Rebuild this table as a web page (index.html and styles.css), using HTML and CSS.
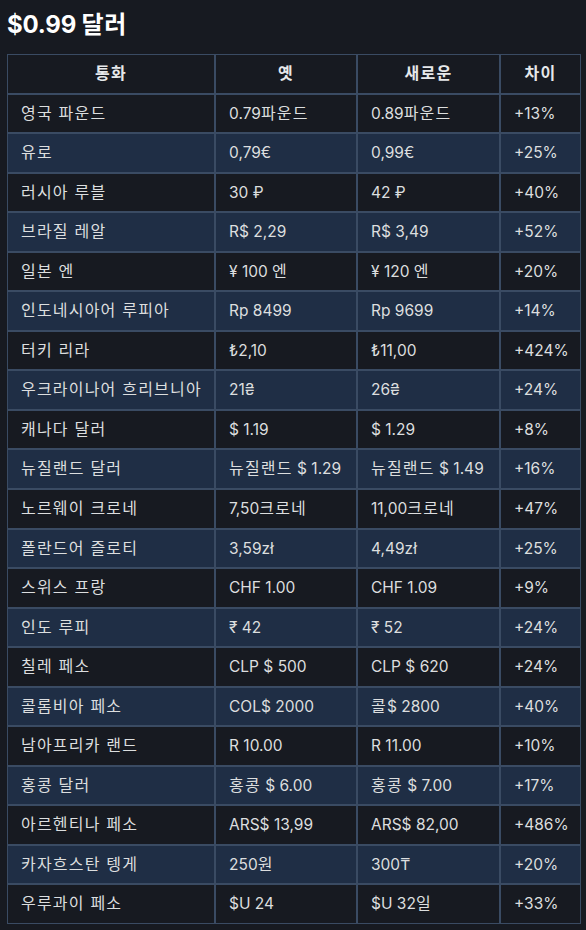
FILE: index.html
```html
<!DOCTYPE html>
<html lang="ko">
<head>
<meta charset="utf-8">
<link rel="stylesheet" href="styles.css">
</head>
<body>
<h2 class="title">$0.99 <span class="k">달러</span></h2>
<table class="prices">
<colgroup><col class="c1"><col class="c2"><col class="c3"><col class="c4"></colgroup>
<thead>
<tr><th><span class="k">통화</span></th><th><span class="k">옛</span></th><th><span class="k">새로운</span></th><th><span class="k">차이</span></th></tr>
</thead>
<tbody>
<tr><td><span class="k">영국 파운드</span></td><td>0.79<span class="k">파운드</span></td><td>0.89<span class="k">파운드</span></td><td>+13%</td></tr>
<tr><td><span class="k">유로</span></td><td>0,79€</td><td>0,99€</td><td>+25%</td></tr>
<tr><td><span class="k">러시아 루블</span></td><td>30 ₽</td><td>42 ₽</td><td>+40%</td></tr>
<tr><td><span class="k">브라질 레알</span></td><td>R$ 2,29</td><td>R$ 3,49</td><td>+52%</td></tr>
<tr><td><span class="k">일본 엔</span></td><td>¥ 100 <span class="k">엔</span></td><td>¥ 120 <span class="k">엔</span></td><td>+20%</td></tr>
<tr><td><span class="k">인도네시아어 루피아</span></td><td>Rp 8499</td><td>Rp 9699</td><td>+14%</td></tr>
<tr><td><span class="k">터키 리라</span></td><td>₺2,10</td><td>₺11,00</td><td>+424%</td></tr>
<tr><td><span class="k">우크라이나어 흐리브니아</span></td><td>21₴</td><td>26₴</td><td>+24%</td></tr>
<tr><td><span class="k">캐나다 달러</span></td><td>$ 1.19</td><td>$ 1.29</td><td>+8%</td></tr>
<tr><td><span class="k">뉴질랜드 달러</span></td><td><span class="k">뉴질랜드</span> $ 1.29</td><td><span class="k">뉴질랜드</span> $ 1.49</td><td>+16%</td></tr>
<tr><td><span class="k">노르웨이 크로네</span></td><td>7,50<span class="k">크로네</span></td><td>11,00<span class="k">크로네</span></td><td>+47%</td></tr>
<tr><td><span class="k">폴란드어 즐로티</span></td><td>3,59zł</td><td>4,49zł</td><td>+25%</td></tr>
<tr><td><span class="k">스위스 프랑</span></td><td>CHF 1.00</td><td>CHF 1.09</td><td>+9%</td></tr>
<tr><td><span class="k">인도 루피</span></td><td>₹ 42</td><td>₹ 52</td><td>+24%</td></tr>
<tr><td><span class="k">칠레 페소</span></td><td>CLP $ 500</td><td>CLP $ 620</td><td>+24%</td></tr>
<tr><td><span class="k">콜롬비아 페소</span></td><td>COL$ 2000</td><td><span class="k">콜</span>$ 2800</td><td>+40%</td></tr>
<tr><td><span class="k">남아프리카 랜드</span></td><td>R 10.00</td><td>R 11.00</td><td>+10%</td></tr>
<tr><td><span class="k">홍콩 달러</span></td><td><span class="k">홍콩</span> $ 6.00</td><td><span class="k">홍콩</span> $ 7.00</td><td>+17%</td></tr>
<tr><td><span class="k">아르헨티나 페소</span></td><td>ARS$ 13,99</td><td>ARS$ 82,00</td><td>+486%</td></tr>
<tr><td><span class="k">카자흐스탄 텡게</span></td><td>250<span class="k">원</span></td><td>300₸</td><td>+20%</td></tr>
<tr><td><span class="k">우루과이 페소</span></td><td>$U 24</td><td>$U 32<span class="k">일</span></td><td>+33%</td></tr>
</tbody>
</table>
</body>
</html>
```
FILE: styles.css
```css
html, body {
  background: #171a21;
}
body {
  margin: 0;
  padding: 10px 5px 0 7px;
  font-family: Inter, "Noto Sans CJK KR", sans-serif;
  color: #dcdedf;
}
.title {
  margin: 0 0 14px 0;
  font-size: 24px;
  line-height: 30px;
  font-weight: 700;
  color: #ffffff;
  letter-spacing: -0.2px;
}
.title .k {
  letter-spacing: 0.5px;
}
.prices {
  border-collapse: separate;
  border-spacing: 0;
  table-layout: fixed;
  width: 574px;
  font-size: 15.5px;
}
.c1 { width: 208px; }
.c2 { width: 142px; }
.c3 { width: 143px; }
.c4 { width: 81px; }
.prices th, .prices td {
  border: 1px solid #3a4b63;
  padding: 8px 13px;
  line-height: 21.55px;
  text-align: left;
  white-space: nowrap;
  overflow: hidden;
}
.prices .k {
  font-size: 16px;
  letter-spacing: 1.2px;
}
.prices th {
  text-align: center;
  font-weight: 600;
  color: #e6e8ea;
}
.prices tbody tr:nth-child(even) td {
  background: #1f2e45;
}
```
